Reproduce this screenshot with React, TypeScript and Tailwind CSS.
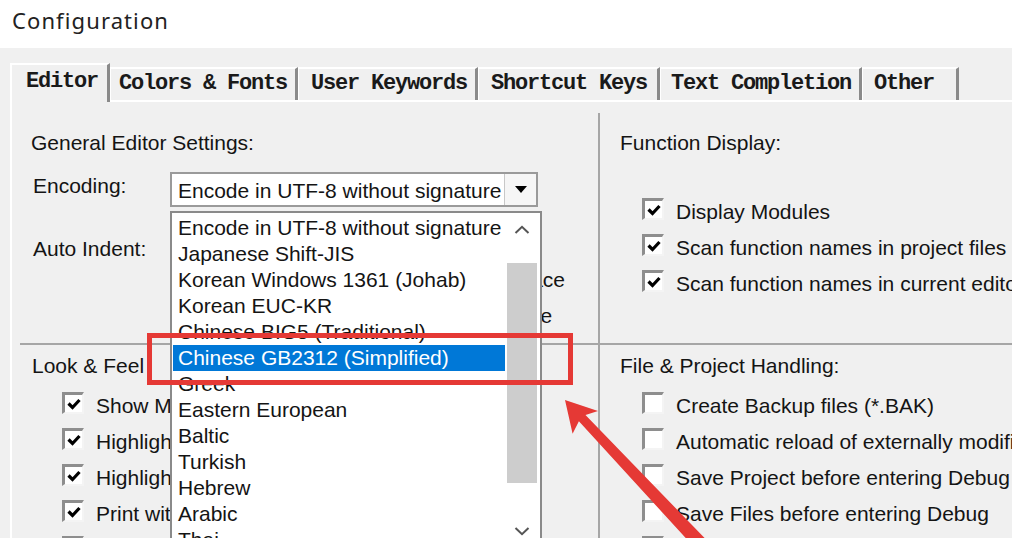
import React from 'react';

const tabs = [
  { label: 'Editor', w: 'w-[100px]', pl: 'pl-[14px]', active: true },
  { label: 'Colors & Fonts', w: 'w-[188px]', pl: 'pl-[8px]', active: false },
  { label: 'User Keywords', w: 'w-[180px]', pl: 'pl-[12px]', active: false },
  { label: 'Shortcut Keys', w: 'w-[182px]', pl: 'pl-[12px]', active: false },
  { label: 'Text Completion', w: 'w-[202px]', pl: 'pl-[10px]', active: false },
  { label: 'Other', w: 'w-[97px]', pl: 'pl-[11px]', active: false },
];

const encodings = [
  'Encode in UTF-8 without signature',
  'Japanese Shift-JIS',
  'Korean Windows 1361 (Johab)',
  'Korean EUC-KR',
  'Chinese BIG5 (Traditional)',
  'Chinese GB2312 (Simplified)',
  'Greek',
  'Eastern European',
  'Baltic',
  'Turkish',
  'Hebrew',
  'Arabic',
  'Thai',
];

function CheckBox({ checked }: { checked?: boolean }) {
  return (
    <span className="flex items-center justify-center w-[22px] h-[22px] shrink-0 bg-white border-t-[3px] border-l-[3px] border-r-2 border-b-2 border-t-[#8e8e8e] border-l-[#8e8e8e] border-r-[#f4f4f4] border-b-[#f4f4f4]">
      {checked && (
        <svg width="14" height="12" viewBox="0 0 14 12">
          <polyline points="1.5,5.5 5.5,9.5 12.5,2" fill="none" stroke="#000" strokeWidth="3.2" />
        </svg>
      )}
    </span>
  );
}

function CheckRow({ label, checked }: { label: string; checked?: boolean }) {
  return (
    <div className="flex items-start h-[36px]">
      <CheckBox checked={checked} />
      <span className="ml-[12px] mt-[1px] leading-[26px] whitespace-nowrap">{label}</span>
    </div>
  );
}

function Chevron({ up }: { up?: boolean }) {
  return (
    <svg width="16" height="9" viewBox="0 0 16 9">
      <polyline
        points={up ? '1.5,8 8,1.8 14.5,8' : '1.5,1 8,7.2 14.5,1'}
        fill="none"
        stroke="#555"
        strokeWidth="2"
      />
    </svg>
  );
}

function EncodingList() {
  return (
    <div className="absolute left-0 top-[39px] z-20 flex w-[372px] h-[340px] bg-white border-2 border-[#8a8a8a]">
      <div className="w-[333px] pt-[1.5px]">
        {encodings.map((e) => (
          <div
            key={e}
            className={
              e === 'Chinese GB2312 (Simplified)'
                ? 'ml-[1px] pl-[5px] h-[26px] leading-[26px] whitespace-nowrap bg-[#0078d7] text-white'
                : 'ml-[1px] pl-[5px] h-[26px] leading-[26px] whitespace-nowrap'
            }
          >
            {e}
          </div>
        ))}
      </div>
      <div className="flex flex-col w-[34px]">
        <div className="h-[33px] flex items-center justify-center">
          <Chevron up />
        </div>
        <div className="h-[17px]" />
        <div className="h-[220px] mx-[2px] bg-[#cdcdcd]" />
        <div className="h-[32px]" />
        <div className="h-[33px] flex items-center justify-center">
          <Chevron />
        </div>
      </div>
    </div>
  );
}

export default function App() {
  return (
    <div className="relative w-[1012px] h-[538px] overflow-hidden bg-[#f0f0f0] text-[21px] text-[#141414] font-['Liberation_Sans',Arial,sans-serif]">
      {/* title bar */}
      <div className="h-[48px] bg-white pl-[12px] pt-[6px]">
        <span className="text-[22px] leading-[28px] tracking-[1.1px] text-[#222] font-['Noto_Sans',sans-serif]">
          Configuration
        </span>
      </div>

      <div className="pl-[10px] pt-[15px]">
        {/* tabs */}
        <div className="flex items-end h-[37px] font-['Liberation_Mono',monospace] font-bold text-[22px] tracking-[-1.2px] text-[#1a1a1a]">
          {tabs.map((t) =>
            t.active ? (
              <div
                key={t.label}
                className={`${t.w} ${t.pl} relative z-10 h-[39px] -mb-[2px] pt-[5px] bg-[#f0f0f0] border-t-2 border-l-2 border-r-[3px] border-t-white border-l-white border-r-[#8a8a8a] leading-[24px] whitespace-pre`}
              >
                {t.label}
              </div>
            ) : (
              <div
                key={t.label}
                className={`${t.w} ${t.pl} h-[33px] pt-[3px] border-t-2 border-l border-r-[3px] border-t-white border-l-white border-r-[#8a8a8a] leading-[24px] whitespace-pre`}
              >
                {t.label}
              </div>
            )
          )}
        </div>

        {/* tab panel */}
        <div className="border-t-2 border-l-2 border-white pl-[8px] pt-[11px] h-[440px]">
          <div className="grid grid-cols-[580px_420px] grid-rows-[232px_200px]">
            {/* General editor settings */}
            <div className="border-r-2 border-b-2 border-[#a6a6a6] pl-[11px] pt-[17px]">
              <div className="leading-[26px] whitespace-nowrap">General Editor Settings:</div>
              <div className="flex items-start mt-[16px]">
                <div className="w-[139px] pl-[2px] mt-[1px] leading-[26px]">Encoding:</div>
                <div className="relative">
                  <div className="flex w-[368px] h-[35px] bg-white border-2 border-[#9a9a9a]">
                    <div className="flex-1 pl-[6px] pt-[4px] leading-[26px] whitespace-nowrap overflow-hidden">
                      Encode in UTF-8 without signature
                    </div>
                    <div className="w-[32px] flex items-center justify-center bg-[#f6f6f6] border-l border-[#c8c8c8]">
                      <svg width="12" height="7" viewBox="0 0 12 7">
                        <polygon points="0,0 12,0 6,7" fill="#000" />
                      </svg>
                    </div>
                  </div>
                  <EncodingList />
                </div>
              </div>
              <div className="flex items-start mt-[23px]">
                <div className="w-[139px] pl-[2px] mt-[6px] leading-[26px]">Auto Indent:</div>
                <div className="w-[150px] h-[32px] mt-[2px] bg-white border-2 border-[#9a9a9a] pl-[6px] leading-[26px]">
                  Smart
                </div>
                <div className="ml-[41px]">
                  <CheckRow label="Virtual Spaces" />
                  <CheckRow label="View White Space" />
                  <CheckRow label="View End of Line" />
                </div>
              </div>
            </div>

            {/* Function display */}
            <div className="border-b-2 border-[#a6a6a6] pl-[20px] pt-[17px]">
              <div className="leading-[26px] whitespace-nowrap">Function Display:</div>
              <div className="mt-[42px] pl-[22px]">
                <CheckRow label="Display Modules" checked />
                <CheckRow label="Scan function names in project files" checked />
                <CheckRow label="Scan function names in current editor files" checked />
              </div>
            </div>

            {/* Look & Feel */}
            <div className="border-r-2 border-[#a6a6a6] pl-[12px] pt-[8px]">
              <div className="leading-[26px] whitespace-nowrap">Look &amp; Feel</div>
              <div className="mt-[13px] pl-[30px]">
                <CheckRow label="Show Message Dialogs" checked />
                <CheckRow label="Highlight Current Line" checked />
                <CheckRow label="Highlight matching braces" checked />
                <CheckRow label="Print with syntax coloring" checked />
                <CheckRow label="Colored Editor Tabs" checked />
              </div>
            </div>

            {/* File & Project handling */}
            <div className="pl-[20px] pt-[8px]">
              <div className="leading-[26px] whitespace-nowrap">File &amp; Project Handling:</div>
              <div className="mt-[13px] pl-[22px]">
                <CheckRow label="Create Backup files (*.BAK)" />
                <CheckRow label="Automatic reload of externally modified files" />
                <CheckRow label="Save Project before entering Debug" />
                <CheckRow label="Save Files before entering Debug" />
                <CheckRow label="Save all before Build" />
              </div>
            </div>
          </div>
        </div>
      </div>

      {/* annotation: red frame */}
      <div className="absolute left-[147px] top-[333px] z-30 w-[426px] h-[52px] border-[5px] border-[#e53935]" />

      {/* annotation: red arrow */}
      <svg className="absolute left-0 top-0 z-30 pointer-events-none" width="1012" height="538" viewBox="0 0 1012 538">
        <polygon
          points="565,400 598,411 585.5,415.1 706.7,540.2 696.5,549.8 578.9,421.3 572.6,433.7"
          fill="#e53935"
        />
      </svg>
    </div>
  );
}
